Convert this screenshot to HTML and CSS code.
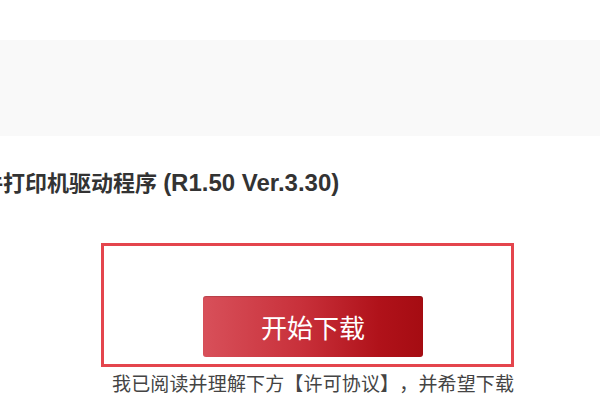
FILE: index.html
```html
<!DOCTYPE html>
<html lang="zh-CN">
<head>
    <meta charset="UTF-8">
    <meta name="viewport" content="width=device-width, initial-scale=1.0">
    <title>驱动下载</title>
    <link rel="stylesheet" href="styles.css">
</head>
<body>
    <div class="page">
        <div class="banner"></div>

        <h1 class="title">件打印机驱动程序 <span class="version">(R1.50 Ver.3.30)</span></h1>

        <div class="download-box">
            <a href="#" class="download-btn">开始下载</a>
        </div>

        <p class="agree">我已阅读并理解下方【许可协议】，并希望下载</p>
    </div>
</body>
</html>
```

FILE: styles.css
```css
body {
    font-family: "Liberation Sans", "Noto Sans CJK SC", sans-serif;
    margin: 0;
    padding: 0;
    background-color: #fff;
    color: #333;
    overflow: hidden;
}

.page {
    padding-top: 40px;
}

.banner {
    height: 96px;
    background-color: #f9f9f9;
}

.title {
    margin: 32px 0 0 -19px;
    font-size: 22px;
    line-height: 30px;
    font-weight: bold;
    color: #333;
    white-space: nowrap;
}

.title .version {
    font-size: 24px;
}

.download-box {
    display: flex;
    align-items: flex-end;
    box-sizing: border-box;
    width: 413px;
    height: 124px;
    margin: 44px 0 0 101px;
    padding: 0 0 7px 99px;
    border: 3px solid #e4454d;
}

.download-btn {
    display: flex;
    align-items: center;
    justify-content: center;
    width: 220px;
    height: 61px;
    border-radius: 3px;
    background: linear-gradient(to right, #d8505a 0%, #c8303a 45%, #b0121a 80%, #a50c12 100%);
    box-shadow: inset 0 1px 1px rgba(0, 0, 0, 0.15);
    color: #fff;
    font-size: 26px;
    text-decoration: none;
}

.agree {
    margin: 5px 0 0 112px;
    font-size: 19px;
    line-height: 26px;
    letter-spacing: 0.15px;
    color: #444;
    white-space: nowrap;
    text-spacing-trim: space-all;
}
```
